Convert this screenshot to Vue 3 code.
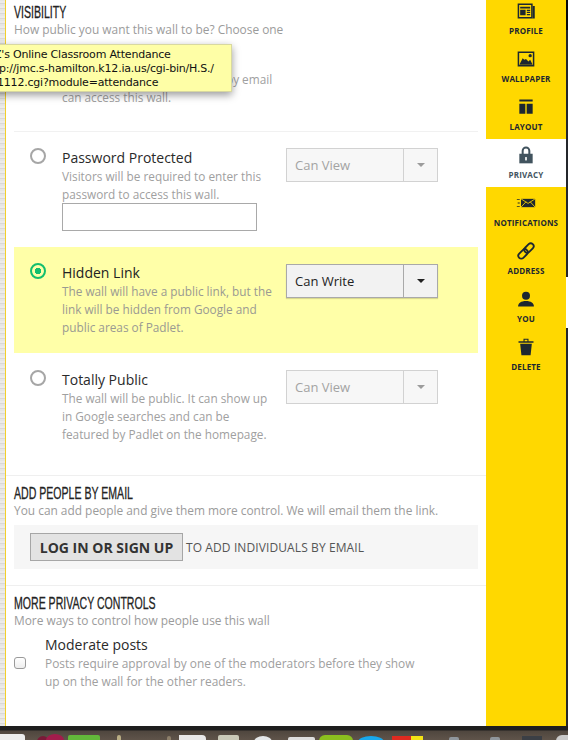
<template>
  <div class="page">
    <div class="texture"></div>
    <main class="panel">
      <section class="block first">
        <h2>VISIBILITY</h2>
        <p class="sub">How public you want this wall to be? Choose one</p>

        <div class="option private-opt">
          <span class="radio"></span>
          <div class="opt-text">
            <div class="opt-title">Private</div>
            <p class="opt-desc">Only you and people you add by email<br />can access this wall.</p>
          </div>
        </div>

        <div class="option password-opt">
          <span class="radio"></span>
          <div class="opt-text">
            <div class="opt-title">Password Protected</div>
            <p class="opt-desc">Visitors will be required to enter this<br />password to access this wall.</p>
            <input class="pass-input" type="text" />
          </div>
          <div class="select">
            <span class="select-label">Can View</span>
            <span class="select-arrow"><i></i></span>
          </div>
        </div>

        <div class="option hidden-opt">
          <span class="radio on"></span>
          <div class="opt-text">
            <div class="opt-title">Hidden Link</div>
            <p class="opt-desc">The wall will have a public link, but the<br />link will be hidden from Google and<br />public areas of Padlet.</p>
          </div>
          <div class="select active">
            <span class="select-label">Can Write</span>
            <span class="select-arrow"><i></i></span>
          </div>
        </div>

        <div class="option public-opt">
          <span class="radio"></span>
          <div class="opt-text">
            <div class="opt-title">Totally Public</div>
            <p class="opt-desc">The wall will be public. It can show up<br />in Google searches and can be<br />featured by Padlet on the homepage.</p>
          </div>
          <div class="select">
            <span class="select-label">Can View</span>
            <span class="select-arrow"><i></i></span>
          </div>
        </div>
      </section>

      <section class="block email">
        <h2>ADD PEOPLE BY EMAIL</h2>
        <p class="sub">You can add people and give them more control. We will email them the link.</p>
        <div class="login-row">
          <button class="login-btn">LOG IN OR SIGN UP</button>
          <span class="login-note">TO ADD INDIVIDUALS BY EMAIL</span>
        </div>
      </section>

      <section class="block more">
        <h2>MORE PRIVACY CONTROLS</h2>
        <p class="sub">More ways to control how people use this wall</p>
        <div class="moderate">
          <span class="check"></span>
          <div>
            <div class="opt-title">Moderate posts</div>
            <p class="opt-desc">Posts require approval by one of the moderators before they show<br />up on the wall for the other readers.</p>
          </div>
        </div>
      </section>
    </main>

    <nav class="sidebar">
      <a v-for="item in navItems" :key="item.label" class="nav-item" :class="{ current: item.current }">
        <svg viewBox="0 0 24 24" width="20" height="20" class="nav-icon" v-html="item.icon"></svg>
        <span>{{ item.label }}</span>
      </a>
    </nav>
    <div class="edge"></div>

    <!-- browser tooltip over the page -->
    <div class="tooltip">
      <div class="tip-one">Z's Online Classroom Attendance</div>
      <div class="tip-two">http://jmc.s-hamilton.k12.ia.us/cgi-bin/H.S./</div>
      <div class="tip-three">1112.cgi?module=attendance</div>
    </div>

    <!-- desktop dock at the bottom -->
    <div class="dock">
      <span
        v-for="d in dockItems"
        :key="d.x"
        class="dock-icon"
        :style="{ left: d.x + 'px', width: d.w + 'px', top: d.t + 'px', background: d.c, borderRadius: d.r }"
      ></span>
    </div>
  </div>
</template>

<script setup>
const navItems = [
  {
    label: 'PROFILE',
    icon: '<path fill="#1d2730" fill-rule="evenodd" d="M2 3h18v18H2zm1.800 1.800v14.400h14.400V4.800z"/><path fill="#1d2730" d="M20 6h2.500v15H20zM5 7h12v2H5zM5 10.500h6.500V17H5zM13 10.500h4V12h-4zM13 13h4v1.500h-4zM13 15.500h4V17h-4z"/>'
  },
  {
    label: 'WALLPAPER',
    icon: '<path fill="#1d2730" fill-rule="evenodd" d="M2 3h20v18H2zm1.800 1.800v14.400h16.400V4.800z"/><path fill="#1d2730" d="M4 19l4-8 2 2 2-1 3 3 2-2 3 6z"/><circle cx="17" cy="8" r="2" fill="#1d2730"/>'
  },
  {
    label: 'LAYOUT',
    icon: '<path fill="#1d2730" d="M4 3h16v2.500H4zM4 8h7.200v12H4zM12.800 8H20v12h-7.200z"/>'
  },
  {
    label: 'PRIVACY',
    current: true,
    icon: '<path fill="none" stroke="#41535e" stroke-width="2.400" d="M8 11V7a4 4 0 0 1 8 0v4"/><path fill="#41535e" d="M4 10.500h16V22H4z"/><rect x="11" y="14.500" width="2" height="4" fill="#fff"/>'
  },
  {
    label: 'NOTIFICATIONS',
    icon: '<path fill="#1d2730" d="M6 7h17v10H6z"/><path fill="none" stroke="#ffd800" stroke-width="1" d="M6 7l8.500 5.500L23 7M6 17l6-6.500M23 17l-6-6.500"/><path fill="#1d2730" d="M1 7.500h3.500v1H1zM2 11.500h2.500v1H2zM1 15.500h3.500v1H1z"/>'
  },
  {
    label: 'ADDRESS',
    icon: '<g fill="none" stroke="#1d2730" stroke-width="2.200" transform="rotate(-45 12 12)"><rect x="0.500" y="8.500" width="13" height="7" rx="3.500"/><rect x="10.500" y="8.500" width="13" height="7" rx="3.500"/></g>'
  },
  {
    label: 'YOU',
    icon: '<circle cx="12" cy="8" r="4.800" fill="#1d2730"/><path fill="#1d2730" d="M2.500 21c0-4 3.500-6.500 9.500-6.500s9.500 2.500 9.500 6.500z"/>'
  },
  {
    label: 'DELETE',
    icon: '<path fill="#1d2730" d="M5 8h14l-1.500 14h-11zM3 5h18v2H3zM9 2h6v3h-1.300V3.300h-3.400V5H9z"/>'
  }
]

const dockItems = [
  { x: 0, w: 25, t: 8, c: '#ececec', r: '0 3px 0 0' },
  { x: 37, w: 12, t: 10, c: '#7a1a38', r: '50%' },
  { x: 46, w: 18, t: 8, c: '#a31c4c', r: '50% 50% 0 0' },
  { x: 68, w: 32, t: 9, c: '#62b83a', r: '2px 2px 0 0' },
  { x: 117, w: 4, t: 9, c: '#b9ad84', r: '2px 2px 0 0' },
  { x: 167, w: 4, t: 10, c: '#8d7f6a', r: '2px 2px 0 0' },
  { x: 179, w: 27, t: 9, c: '#e8e8e8', r: '0 4px 0 0' },
  { x: 218, w: 21, t: 9, c: '#c9c9b8', r: '2px 2px 0 0' },
  { x: 254, w: 18, t: 10, c: '#e4e7e9', r: '50% 50% 0 0' },
  { x: 288, w: 27, t: 11, c: '#dedede', r: '2px 2px 0 0' },
  { x: 319, w: 34, t: 9, c: '#8bbf1e', r: '6px 6px 0 0' },
  { x: 358, w: 26, t: 10, c: '#18a8ec', r: '50% 50% 0 0' },
  { x: 392, w: 19, t: 10, c: '#e02a20', r: '0' },
  { x: 411, w: 12, t: 10, c: '#f3e315', r: '0' },
  { x: 449, w: 10, t: 11, c: '#8f969c', r: '2px 2px 0 0' },
  { x: 490, w: 10, t: 11, c: '#8f969c', r: '2px 2px 0 0' },
  { x: 522, w: 20, t: 10, c: '#3b3f45', r: '0' },
  { x: 556, w: 12, t: 9, c: '#c9c9c9', r: '50% 0 0 0' }
]
</script>

<style scoped>
.page {
  position: relative;
  width: 568px;
  height: 740px;
  overflow: hidden;
  background: #2a2a2a;
  font-family: "Open Sans", "Noto Sans", sans-serif;
  display: flex;
  align-items: flex-start;
}
.texture {
  width: 5px;
  height: 726px;
  flex: none;
  background: repeating-linear-gradient(0deg, #e6e6e4 0 2px, #d9d9d6 2px 3px, #ecebe9 3px 5px);
}
.panel {
  width: 481px;
  height: 726px;
  flex: none;
  background: #fff;
  border-left: 1px solid #f2cf2a;
  box-sizing: border-box;
  overflow: hidden;
}
.block {
  padding: 0 8px;
}
h2 {
  margin: 0;
  font-family: "Liberation Sans", sans-serif;
  font-size: 16.500px;
  line-height: 18px;
  font-weight: 400;
  color: #222;
  white-space: nowrap;
  transform: scaleX(0.64);
  transform-origin: left center;
  -webkit-text-stroke: 0.3px #222;
}
.first h2 {
  padding-top: 3px;
}
.sub {
  margin: 0;
  font-size: 11.900px;
  line-height: 16px;
  color: #9b9b9b;
}
.option {
  display: flex;
  padding: 0 0 0 16px;
}
.radio {
  width: 16px;
  height: 16px;
  flex: none;
  box-sizing: border-box;
  border: 2px solid #a6a6a6;
  border-radius: 50%;
  margin-right: 16px;
  margin-top: -1px;
  background: #fff;
}
.radio.on {
  border-color: #13bf6e;
  background: radial-gradient(circle, #13bf6e 0 3px, #ffffa8 3.500px);
}
.opt-text {
  width: 224px;
  flex: none;
}
.opt-title {
  font-size: 14px;
  line-height: 18px;
  color: #2a2a2a;
}
.opt-desc {
  margin: 0;
  font-size: 11.800px;
  line-height: 18px;
  color: #a0a0a0;
}
.moderate .opt-desc {
  font-size: 11.900px;
}
.private-opt {
  height: 79px;
  padding-top: 15px;
  border-bottom: 1px solid #f1f1f1;
}
.password-opt {
  height: 98px;
  padding-top: 17px;
}
.pass-input {
  display: block;
  width: 195px;
  height: 28px;
  box-sizing: border-box;
  border: 1px solid #a9a9a9;
  background: #fff;
  margin: 0;
  padding: 0;
}
.hidden-opt {
  height: 106px;
  padding-top: 17px;
  background: #ffffa8;
  width: 464px;
  box-sizing: border-box;
}
.hidden-opt .opt-title {
  color: #222;
}
.hidden-opt .opt-desc {
  color: #9a9a92;
}
.public-opt {
  height: 104px;
  padding-top: 18px;
}
.select {
  width: 152px;
  height: 34px;
  box-sizing: border-box;
  border: 1px solid #d2d2d2;
  background: #f7f7f7;
  display: flex;
  margin-top: -1px;
  color: #a3a3a3;
}
.select-label {
  flex: 1;
  font-size: 13px;
  line-height: 32px;
  padding-left: 8px;
}
.select-arrow {
  width: 33px;
  border-left: 1px solid #d2d2d2;
  display: flex;
  align-items: center;
  justify-content: center;
}
.select-arrow i {
  border-left: 4px solid transparent;
  border-right: 4px solid transparent;
  border-top: 4px solid #9c9c9c;
}
.select.active {
  margin-top: 0;
  border-color: #a9a9a9;
  background: #f2f2f2;
  color: #222;
  box-shadow: 0 1px 1px rgba(0, 0, 0, 0.15);
}
.active .select-arrow {
  border-left-color: #a9a9a9;
}
.active .select-arrow i {
  border-top-color: #222;
}
.email {
  border-top: 1px solid #efefef;
  padding-top: 8px;
  height: 110px;
  box-sizing: border-box;
}
.login-row {
  margin-top: 7px;
  height: 44px;
  width: 464px;
  background: #f6f6f6;
  display: flex;
  align-items: center;
  padding-left: 16px;
  box-sizing: border-box;
}
.login-btn {
  width: 153px;
  height: 28px;
  padding: 0;
  border: 1px solid #a6a6a6;
  background: #e3e3e3;
  font-family: inherit;
  font-size: 14px;
  font-weight: 700;
  color: #333;
}
.login-note {
  margin-left: 3px;
  font-size: 12px;
  color: #555;
  letter-spacing: 0.1px;
}
.more {
  border-top: 1px solid #efefef;
  padding-top: 8px;
}
.moderate {
  display: flex;
  align-items: center;
  margin-top: 8px;
}
.check {
  width: 12px;
  height: 12px;
  flex: none;
  box-sizing: border-box;
  border: 1px solid #9a9a9a;
  border-radius: 3px;
  background: linear-gradient(#fff, #eee);
  margin-right: 19px;
}
.sidebar {
  width: 80px;
  height: 731px;
  margin-top: -5px;
  flex: none;
  background: #ffd800;
  display: flex;
  flex-direction: column;
}
.nav-item {
  height: 48px;
  flex: none;
  display: flex;
  flex-direction: column;
  align-items: center;
  color: #1d2730;
  font-size: 8px;
  font-weight: 700;
  letter-spacing: 0.150px;
  line-height: 12px;
}
.nav-item.current {
  background: #fff;
  color: #44545f;
}
.nav-icon {
  display: block;
  margin-top: 6px;
  margin-bottom: 4px;
}
.edge {
  width: 2px;
  height: 726px;
  flex: none;
  background: linear-gradient(#08090b 0 30px, #24262b 30px 277px, #fff 277px 328px, #24262b 328px);
}
.tooltip {
  position: absolute;
  left: -20px;
  top: 44px;
  width: 252px;
  height: 48px;
  box-sizing: border-box;
  padding-top: 3px;
  background: #fefea6;
  border: 1px solid #d8d8a0;
  box-shadow: 0 3px 8px rgba(0, 0, 0, 0.4);
  font-family: "DejaVu Sans", sans-serif;
  font-size: 11px;
  letter-spacing: -0.200px;
  line-height: 14px;
  color: #111;
  white-space: nowrap;
  overflow: hidden;
}
.tip-one {
  margin-left: 13px;
}
.tip-two {
  margin-left: 3px;
}
.tip-three {
  margin-left: 16px;
}
.dock {
  position: absolute;
  left: 0;
  right: 0;
  top: 726px;
  height: 14px;
  overflow: hidden;
  background: linear-gradient(#1e1e1e 0 4px, #4f463e 5px, #5f544a);
}
.dock-icon {
  position: absolute;
  height: 12px;
}
</style>
